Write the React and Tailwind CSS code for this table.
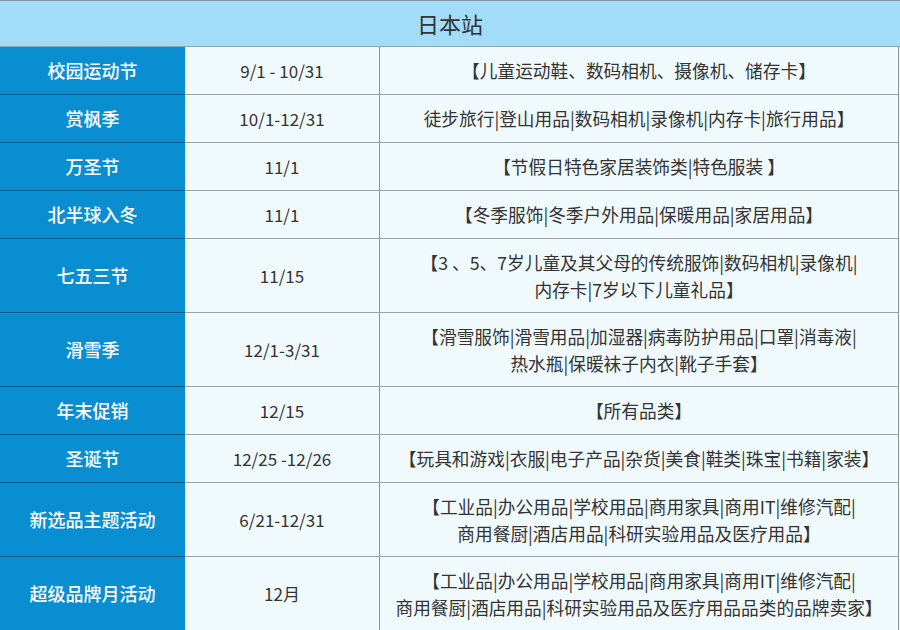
const rows = [
  ["校园运动节", "9/1 - 10/31", ["【儿童运动鞋、数码相机、摄像机、储存卡】"]],
  ["赏枫季", "10/1-12/31", ["徒步旅行|登山用品|数码相机|录像机|内存卡|旅行用品】"]],
  ["万圣节", "11/1", ["【节假日特色家居装饰类|特色服装 】"]],
  ["北半球入冬", "11/1", ["【冬季服饰|冬季户外用品|保暖用品|家居用品】"]],
  ["七五三节", "11/15", ["【3 、5、7岁儿童及其父母的传统服饰|数码相机|录像机|", "内存卡|7岁以下儿童礼品】"]],
  ["滑雪季", "12/1-3/31", ["【滑雪服饰|滑雪用品|加湿器|病毒防护用品|口罩|消毒液|", "热水瓶|保暖袜子内衣|靴子手套】"]],
  ["年末促销", "12/15", ["【所有品类】"]],
  ["圣诞节", "12/25 -12/26", ["【玩具和游戏|衣服|电子产品|杂货|美食|鞋类|珠宝|书籍|家装】"]],
  ["新选品主题活动", "6/21-12/31", ["【工业品|办公用品|学校用品|商用家具|商用IT|维修汽配|", "商用餐厨|酒店用品|科研实验用品及医疗用品】"]],
  ["超级品牌月活动", "12月", ["【工业品|办公用品|学校用品|商用家具|商用IT|维修汽配|", "商用餐厨|酒店用品|科研实验用品及医疗用品品类的品牌卖家】"]],
];

export default function App() {
  return (
    <div
      className="w-[900px] h-[630px] overflow-hidden bg-[#f0fafd] text-[#333]"
      style={{ fontFamily: '"Noto Sans CJK SC", "Noto Sans", sans-serif' }}
    >
      <div className="h-[47px] bg-[#a3dcf9] border-t border-[#7f98a6] border-b border-b-[#8fa7b4] flex items-center justify-center text-[22px]">
        日本站
      </div>
      {rows.map(([name, date, cats]) => {
        const tall = cats.length > 1;
        return (
          <div
            key={name}
            className={`grid grid-cols-[185px_195px_1fr] ${tall ? "h-[74px]" : "h-[48px]"}`}
          >
            <div className="bg-[#0a8ed2] border-b border-[#0b5c8a] flex items-center justify-center text-white text-[18px] font-medium">
              {name}
            </div>
            <div className="border-b border-[#9aa4a9] border-r border-r-[#8b9499] flex items-center justify-center text-[17px]">
              {date}
            </div>
            <div className="border-b border-[#9aa4a9] border-r border-r-[#8b9499] mr-[1px] flex flex-col items-center justify-center text-[17.7px] leading-[27px]">
              {cats.map((c) => (
                <div key={c}>{c}</div>
              ))}
            </div>
          </div>
        );
      })}
    </div>
  );
}
